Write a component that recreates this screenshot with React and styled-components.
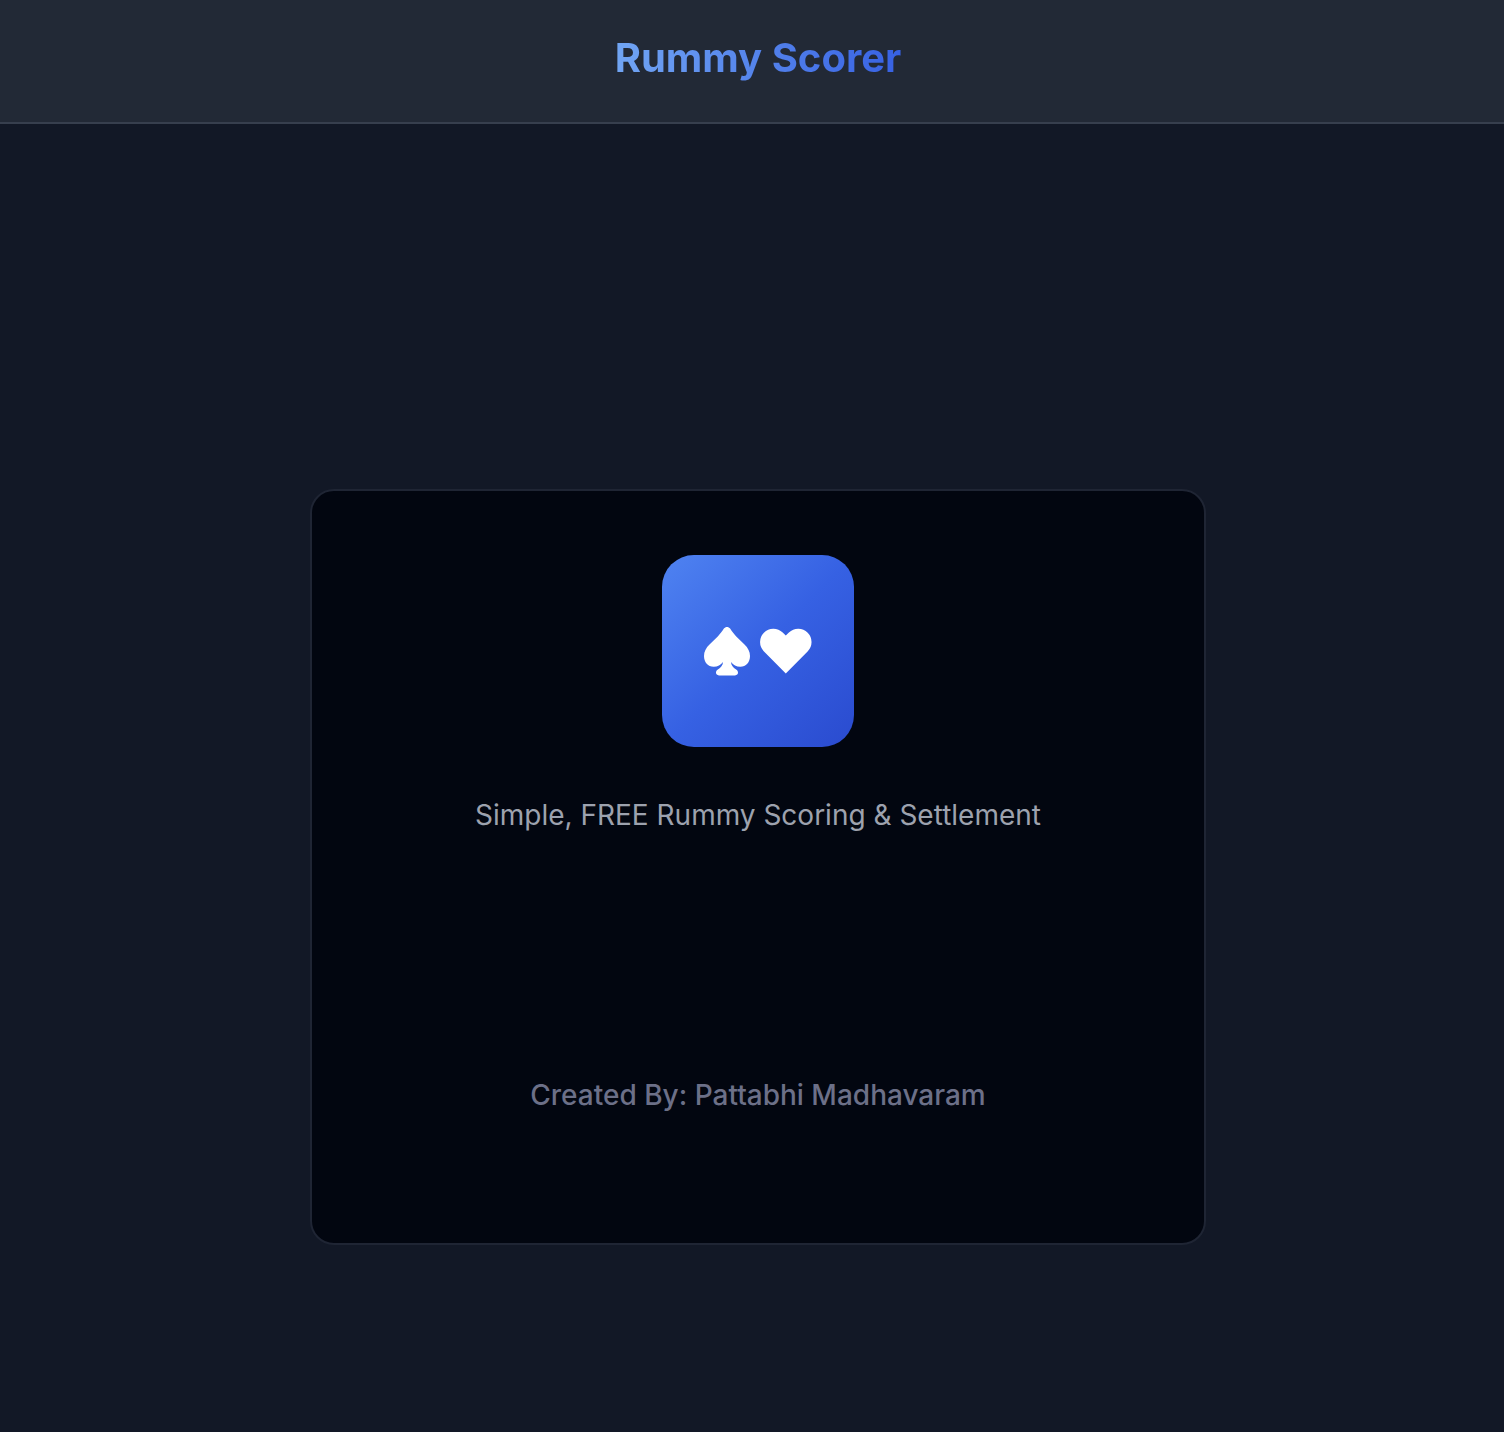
import React from "react";
import styled, { createGlobalStyle } from "styled-components";

const GlobalStyle = createGlobalStyle`
  *, *::before, *::after { box-sizing: border-box; }
  body {
    margin: 0;
    background: #121826;
    font-family: Inter, "Liberation Sans", sans-serif;
    font-variant-ligatures: none;
    -webkit-font-smoothing: antialiased;
  }
`;

const Page = styled.div`
  min-height: 100vh;
  display: flex;
  flex-direction: column;
`;

const Header = styled.header`
  display: flex;
  justify-content: center;
  padding: 30px 0 36px 12px;
  background: #222936;
  border-bottom: 2px solid #373f4e;
`;

const Title = styled.h1`
  margin: 0;
  font-size: 40px;
  line-height: 56px;
  font-weight: 700;
  color: transparent;
  background: linear-gradient(to right, #71a5f4, #3761e3);
  background-clip: text;
  -webkit-background-clip: text;
`;

const Main = styled.main`
  flex: 1;
  display: flex;
  flex-direction: column;
  align-items: center;
  padding: 365px 0 186px 12px;
`;

const Card = styled.section`
  width: 100%;
  max-width: 896px;
  display: flex;
  flex-direction: column;
  align-items: center;
  padding: 64px 64px 128px;
  background: #020610;
  border: 2px solid #1f2534;
  border-radius: 24px;
`;

const Logo = styled.div`
  width: 192px;
  height: 192px;
  display: flex;
  align-items: center;
  justify-content: center;
  gap: 8px;
  border-radius: 32px;
  background: linear-gradient(to bottom right, #4f83f1, #3661e3 50%, #2a4bcf);
`;

const Suit = styled.svg`
  display: block;
  fill: #ffffff;
`;

const Tagline = styled.p`
  margin: 48px 0 0;
  font-size: 28px;
  line-height: 40px;
  color: #9da2ae;
`;

const Credit = styled.p`
  margin: 240px 0 0;
  font-size: 28px;
  line-height: 40px;
  font-weight: 500;
  color: #6c7088;
`;

export default function App() {
  return (
    <>
      <GlobalStyle />
      <Page>
        <Header>
          <Title>Rummy Scorer</Title>
        </Header>
        <Main>
          <Card>
            <Logo role="img" aria-label="Spade and heart">
              <Suit width="48" height="50" viewBox="13 16 48 50" aria-hidden="true">
                <path d="M33.9 18.6 C35.4 16.4 38.6 16.4 40.1 18.6 C42.2 21.6 43.6 23.9 46 26.2 L54.5 34.4 C58 37.8 60 41.5 60 46 C60 52.4 56 56.7 50.3 56.7 C46.3 56.7 43.3 55 41 52 C41.2 55.6 43.3 57.6 45.8 59.3 C47.4 60.4 48 61.3 48 62.6 C48 64.3 46.9 65.4 45 65.4 H29 C27.1 65.4 26 64.3 26 62.6 C26 61.3 26.6 60.4 28.2 59.3 C30.7 57.6 32.8 55.6 33 52 C30.7 55 27.7 56.7 23.7 56.7 C18 56.7 14 52.4 14 46 C14 41.5 16 37.8 19.5 34.4 L28 26.2 C30.4 23.9 31.8 21.6 33.9 18.6 Z" />
              </Suit>
              <Suit width="54" height="50" viewBox="69 16 54 50" aria-hidden="true">
                <path d="M95.8 63.5 L74 41.5 A13.2 13.2 0 0 1 92.7 22.6 L95.8 25.4 L98.9 22.6 A13.2 13.2 0 0 1 117.6 41.5 Z" />
              </Suit>
            </Logo>
            <Tagline>Simple, FREE Rummy Scoring &amp; Settlement</Tagline>
            <Credit>Created By: Pattabhi Madhavaram</Credit>
          </Card>
        </Main>
      </Page>
    </>
  );
}
